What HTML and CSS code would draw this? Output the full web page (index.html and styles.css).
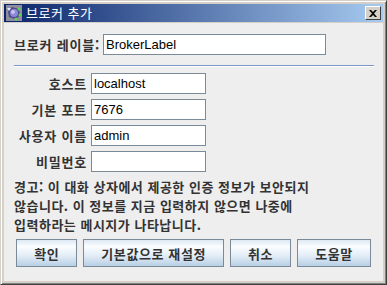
FILE: index.html
```html
<!DOCTYPE html>
<html lang="ko">
<head>
    <meta charset="UTF-8">
    <title>브로커 추가</title>
    <link rel="stylesheet" href="styles.css">
</head>
<body>
    <div class="window">
        <div class="titlebar">
            <svg class="app-icon" width="16" height="16" viewBox="0 0 16 16">
                <rect x="0" y="0" width="16" height="16" fill="#8c8c9c"/>
                <polygon points="2,6 6,2 13,4 14,11 9,14 3,12" fill="#4a4a8c"/>
                <circle cx="8" cy="8" r="4" fill="#8e86d6"/>
                <circle cx="7" cy="7" r="2" fill="#c8c4f0"/>
                <circle cx="13" cy="4" r="1.5" fill="#5cd84a"/>
                <circle cx="14" cy="10" r="1.5" fill="#5cd84a"/>
                <circle cx="10" cy="14" r="1.5" fill="#5cd84a"/>
                <path d="M1 3 L5 3 L3 6 Z" fill="#e8e8f0"/>
            </svg>
            <span class="title">브로커 추가</span>
            <span class="close">
                <svg width="8" height="7" viewBox="0 0 8 7">
                    <path d="M0 0 L2 0 L4 2 L6 0 L8 0 L5 3.5 L8 7 L6 7 L4 5 L2 7 L0 7 L3 3.5 Z" fill="#000"/>
                </svg>
            </span>
        </div>
        <div class="content">
            <div class="name-row">
                <label class="lbl">브로커 레이블:</label>
                <input class="field wide" type="text" value="BrokerLabel">
            </div>
            <div class="sep"></div>
            <div class="form">
                <label class="lbl right">호스트</label>
                <input class="field" type="text" value="localhost">
                <label class="lbl right">기본 포트</label>
                <input class="field" type="text" value="7676">
                <label class="lbl right">사용자 이름</label>
                <input class="field" type="text" value="admin">
                <label class="lbl right">비밀번호</label>
                <input class="field" type="password" value="">
            </div>
            <p class="warn">경고: 이 대화 상자에서 제공한 인증 정보가 보안되지<br>않습니다. 이 정보를 지금 입력하지 않으면 나중에<br>입력하라는 메시지가 나타납니다.</p>
            <div class="buttons">
                <button class="btn">확인</button>
                <button class="btn">기본값으로 재설정</button>
                <button class="btn">취소</button>
                <button class="btn">도움말</button>
            </div>
        </div>
    </div>
</body>
</html>
```

FILE: styles.css
```css
* {
    padding: 0;
    margin: 0;
    box-sizing: border-box;
}
body {
    background: #d4d0c8;
    font-family: "Noto Sans CJK KR", "Liberation Sans", sans-serif;
}
.window {
    width: 387px;
    height: 285px;
    background: #d4d0c8;
    border-top: 1px solid #d4d0c8;
    border-left: 1px solid #d4d0c8;
    border-right: 1px solid #404040;
    border-bottom: 1px solid #404040;
    box-shadow: inset 1px 1px 0 #fff, inset -1px -1px 0 #808080;
    padding: 3px;
    display: flex;
    flex-direction: column;
}
.titlebar {
    height: 18px;
    display: flex;
    align-items: center;
    background: linear-gradient(to right, #0a246a, #a6caf0);
    padding-left: 2px;
    padding-right: 2px;
    margin-bottom: 1px;
}
.app-icon {
    flex: none;
}
.title {
    color: #fff;
    font-size: 13px;
    margin-left: 4px;
    flex: 1;
    line-height: 18px;
    letter-spacing: 0.5px;
}
.close {
    width: 16px;
    height: 14px;
    background: #d4d0c8;
    border-top: 1px solid #fff;
    border-left: 1px solid #fff;
    border-right: 1px solid #404040;
    border-bottom: 1px solid #404040;
    display: flex;
    align-items: center;
    justify-content: center;
}
.content {
    flex: 1;
    background: #eeeeee;
    padding: 11px 8px 0 10px;
}
.lbl {
    font-size: 13px;
    font-weight: bold;
    color: #333333;
    line-height: 21px;
    white-space: nowrap;
    letter-spacing: 0.8px;
}
.right {
    text-align: right;
}
.field {
    height: 21px;
    border: 1px solid #7a8a99;
    background: #fff;
    font-family: "Liberation Sans", sans-serif;
    font-size: 13px;
    color: #000;
    padding: 0 2px;
    outline: none;
}
.name-row {
    display: flex;
    gap: 6px;
}
.name-row .lbl {
    width: 83px;
}
.field.wide {
    width: 223px;
}
.sep {
    height: 2px;
    margin-top: 10px;
    margin-right: 1px;
    border-top: 1px solid #7d96c4;
    border-bottom: 1px solid #fff;
}
.form {
    display: grid;
    grid-template-columns: 72px 115px;
    column-gap: 5px;
    row-gap: 5px;
    margin-top: 6px;
}
.form .lbl {
    margin-right: -1px;
}
.form .field {
    width: 115px;
}
.warn {
    font-size: 13px;
    font-weight: bold;
    color: #333333;
    line-height: 19px;
    margin-top: 5px;
    white-space: nowrap;
    letter-spacing: 0.5px;
}
.buttons {
    display: flex;
    justify-content: center;
    gap: 6px;
    margin-top: 5px;
    padding-right: 2px;
}
.btn {
    height: 28px;
    padding: 0 17px;
    border: 1px solid #7a8a99;
    background: linear-gradient(to bottom, #dde8f3 0%, #fbfdff 25%, #e3edf7 60%, #b8cfe5 100%);
    font-family: "Noto Sans CJK KR", sans-serif;
    font-size: 13px;
    font-weight: bold;
    color: #333333;
    letter-spacing: 0.6px;
}
```
